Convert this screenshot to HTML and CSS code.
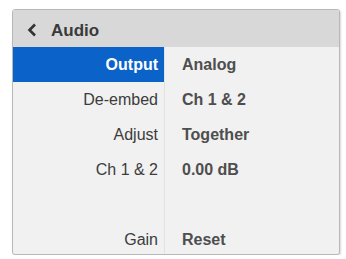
FILE: index.html
```html
<!DOCTYPE html>
<html lang="en">
<head>
    <meta charset="UTF-8">
    <title>Audio</title>
    <link rel="stylesheet" href="styles.css">
</head>
<body>
    <div class="panel">
        <div class="header">
            <svg class="back" width="10" height="14" viewBox="0 0 10 14">
                <path d="M8 1.5 L2.5 7 L8 12.5" fill="none" stroke="#333" stroke-width="2.6"/>
            </svg>
            <span>Audio</span>
        </div>
        <div class="rows">
            <div class="label selected">Output</div>
            <div class="value">Analog</div>
            <div class="label">De-embed</div>
            <div class="value">Ch 1 &amp; 2</div>
            <div class="label">Adjust</div>
            <div class="value">Together</div>
            <div class="label">Ch 1 &amp; 2</div>
            <div class="value">0.00 dB</div>
            <div class="label"></div>
            <div class="value"></div>
            <div class="label">Gain</div>
            <div class="value">Reset</div>
        </div>
    </div>
</body>
</html>
```

FILE: styles.css
```css
* {
    margin: 0;
    padding: 0;
    box-sizing: border-box;
}

body {
    font-family: "Liberation Sans", Arial, sans-serif;
    background: #ffffff;
    padding: 9px 6px 0 12px;
}

.panel {
    width: 328px;
    height: 246px;
    background: #f1f1f1;
    border: 1.5px solid #b8b8b8;
    border-radius: 3px;
    box-shadow: 1px 1px 2px rgba(0, 0, 0, 0.15);
    overflow: hidden;
    display: flex;
    flex-direction: column;
}

.header {
    height: 37px;
    flex-shrink: 0;
    background: #d8d8d8;
    display: flex;
    align-items: center;
    gap: 14px;
    padding: 4px 0 0 14px;
    font-size: 17px;
    font-weight: bold;
    color: #3a3a3a;
}

.back {
    margin-top: -1px;
}

.rows {
    flex: 1;
    display: grid;
    grid-template-columns: 152px 1fr;
    grid-template-rows: 35px 35px 35px 35px 1fr 29px;
}

.label,
.value {
    display: flex;
    align-items: center;
    font-size: 16px;
    color: #3c3c3c;
}

.label {
    justify-content: flex-end;
    padding-right: 6px;
    border-right: 1px solid #e2e2e2;
}

.value {
    padding-left: 17px;
    font-weight: bold;
    color: #4e4e4e;
}

.selected {
    background: #0b62c9;
    color: #ffffff;
    font-weight: bold;
}
```
